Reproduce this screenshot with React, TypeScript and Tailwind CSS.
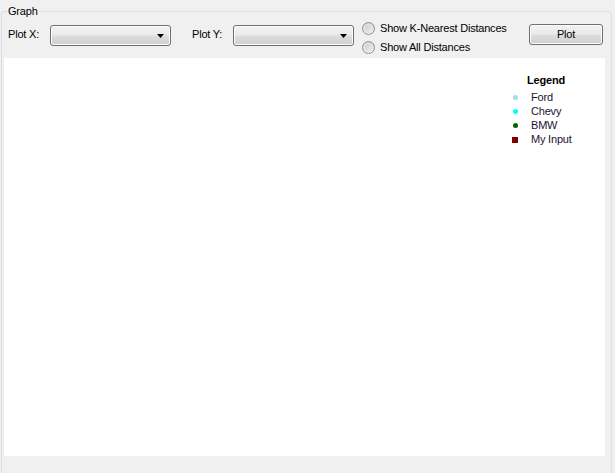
const font = { fontFamily: '"Liberation Sans", Arial, sans-serif' }

const ComboBox = () => (
  <div className="relative mt-[7px] h-[21px] w-[121px] rounded-[3px] border border-[#707070] bg-[linear-gradient(to_bottom,#f2f2f2_0%,#ebebeb_48%,#dddddd_52%,#cfcfcf_100%)] shadow-[inset_0_0_0_1px_#fcfcfc]">
    <svg className="absolute right-[6px] top-[8px]" width="7" height="4" viewBox="0 0 7 4">
      <path d="M0 0h7L3.5 4z" fill="#000" />
    </svg>
  </div>
)

const Radio = ({ label }: { label: string }) => (
  <div className="flex h-[19px] items-center">
    <div className="flex h-[13px] w-[13px] items-center justify-center rounded-full border border-[#8e8f8f] bg-[linear-gradient(to_bottom,#d4d4d4,#f4f4f4)]">
      <div className="h-[9px] w-[9px] rounded-full bg-[linear-gradient(135deg,#cbcbcb,#f1f1f1)] shadow-[inset_0_0_0_1px_#e4e4e4]" />
    </div>
    <span className="ml-[5px]">{label}</span>
  </div>
)

const legendItems = [
  { name: 'Ford', color: 'bg-[#add8e6]', square: false },
  { name: 'Chevy', color: 'bg-[#00ffff]', square: false },
  { name: 'BMW', color: 'bg-[#006400]', square: false },
  { name: 'My Input', color: 'bg-[#800000]', square: true },
]

export default function App() {
  return (
    <div
      className="h-[473px] w-[615px] overflow-hidden bg-[#f0f0f0] pl-[1px] pt-[5px] text-[11px] leading-[13px] tracking-[-0.2px] text-black"
      style={font}
    >
      <fieldset className="h-[480px] w-[611px] rounded-[3px] border border-[#d5dfe5] px-[2px]">
        <legend className="ml-[3px] px-[1px] leading-[13px]">Graph</legend>

        {/* controls row */}
        <div className="flex h-[38px] items-start">
          <span className="ml-[4px] mt-[10px] w-[42px]">Plot X:</span>
          <ComboBox />
          <span className="ml-[21px] mt-[10px] w-[41px]">Plot Y:</span>
          <ComboBox />
          <div className="ml-[8px] mt-[1px] flex w-[167px] flex-col">
            <Radio label="Show K-Nearest Distances" />
            <Radio label="Show All Distances" />
          </div>
          <button className="mt-[6px] flex h-[21px] w-[74px] items-center justify-center rounded-[3px] border border-[#707070] bg-[linear-gradient(to_bottom,#f2f2f2_0%,#ebebeb_48%,#dddddd_52%,#cfcfcf_100%)] shadow-[inset_0_0_0_1px_#fcfcfc]">
            Plot
          </button>
        </div>

        {/* plot area */}
        <div className="mt-[2px] flex h-[398px] w-[601px] justify-end bg-white">
          <div className="mr-[21px] mt-[16px] w-[76px] text-[#1c1430]">
            <div className="h-[13px] text-center font-bold text-black">Legend</div>
            <div className="mt-[3.5px]">
              {legendItems.map(item => (
                <div key={item.name} className="flex h-[14px] items-center">
                  <div className="flex w-[14px] justify-center">
                    <div
                      className={`${item.color} ${item.square ? 'h-[6px] w-[6px]' : 'h-[5px] w-[5px] rounded-full'}`}
                    />
                  </div>
                  <span className="ml-[9px]">{item.name}</span>
                </div>
              ))}
            </div>
          </div>
        </div>
      </fieldset>
    </div>
  )
}
